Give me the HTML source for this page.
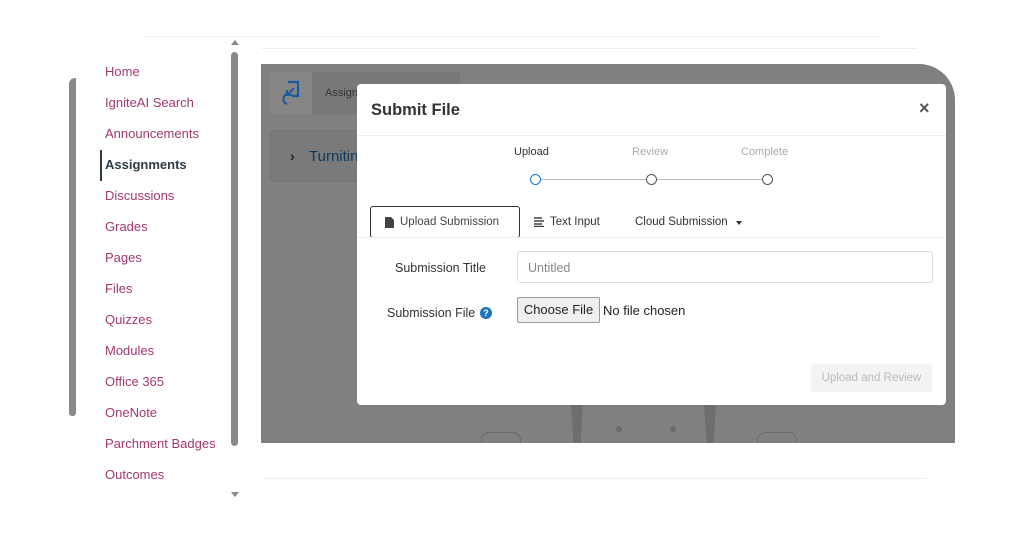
<!DOCTYPE html>
<html><head><meta charset="utf-8"><style>
*{box-sizing:border-box;margin:0;padding:0}
body{width:1024px;height:535px;background:#fff;position:relative;overflow:hidden;font-family:"Liberation Sans",sans-serif}
.abs{position:absolute}
.nav a{position:absolute;left:105px;color:#a3386f;font-size:13px;text-decoration:none;white-space:nowrap}
.nav a.act{color:#2d3b45;font-weight:bold}
</style></head><body>
<div class="abs" style="left:145px;top:36px;width:735px;height:1px;background:#eee"></div>
<div class="abs" style="left:262px;top:48px;width:655px;height:1px;background:#eee"></div>
<div class="abs" style="left:262px;top:478px;width:665px;height:1px;background:#eee"></div>
<div class="abs" style="left:69px;top:78px;width:7px;height:338px;background:#8a8a8a;border-radius:6px 0 3px 3px"></div>
<div class="abs" style="left:231px;top:52px;width:7px;height:394px;background:#8a8a8a;border-radius:4px"></div>
<div class="abs" style="left:231px;top:40px;width:0;height:0;border-left:4px solid transparent;border-right:4px solid transparent;border-bottom:5px solid #888"></div>
<div class="abs" style="left:231px;top:492px;width:0;height:0;border-left:4px solid transparent;border-right:4px solid transparent;border-top:5px solid #888"></div>
<div class="nav">
<a style="top:64px">Home</a>
<a style="top:95px">IgniteAI Search</a>
<a style="top:126px">Announcements</a>
<div class="abs" style="left:100px;top:150px;width:2px;height:31px;background:#2d3b45"></div>
<a class="act" style="top:157px">Assignments</a>
<a style="top:188px">Discussions</a>
<a style="top:219px">Grades</a>
<a style="top:250px">Pages</a>
<a style="top:281px">Files</a>
<a style="top:312px">Quizzes</a>
<a style="top:343px">Modules</a>
<a style="top:374px">Office 365</a>
<a style="top:405px">OneNote</a>
<a style="top:436px">Parchment Badges</a>
<a style="top:467px">Outcomes</a>
</div>
<div class="abs" style="left:261px;top:64px;width:694px;height:379px;background:#808080;border-radius:0 36px 0 0;overflow:hidden">
  <div class="abs" style="left:9px;top:8px;width:42px;height:42px;background:#868686"></div>
  <svg class="abs" style="left:19px;top:16px" width="22" height="26" viewBox="0 0 22 26"><path d="M8 2H18V16H12" fill="none" stroke="#1a5aa0" stroke-width="2.2"/><path d="M14 8L7 15M7 10V15H12" fill="none" stroke="#1a5aa0" stroke-width="2"/><path d="M6 14C2 18 3 23 7 24" fill="none" stroke="#1a5aa0" stroke-width="2"/></svg>
  <div class="abs" style="left:51px;top:8px;width:148px;height:42px;background:#787878"></div>
  <div class="abs" style="left:64px;top:23px;font-size:11px;color:#333">Assignments</div>
  <div class="abs" style="left:9px;top:66px;width:120px;height:52px;background:#7a7a7a;border:1px solid #757575;border-radius:3px"></div>
  <div class="abs" style="left:29px;top:84px;font-size:14px;color:#222;font-weight:bold">›</div>
  <div class="abs" style="left:48px;top:84px;font-size:15px;color:#0e3a5e">Turnitin</div>
  <div class="abs" style="left:310px;top:340px;width:12px;height:40px;background:#6e6e6e;clip-path:polygon(0 0,100% 0,80% 100%,20% 100%)"></div>
  <div class="abs" style="left:443px;top:340px;width:12px;height:40px;background:#6e6e6e;clip-path:polygon(0 0,100% 0,80% 100%,20% 100%)"></div>
  <div class="abs" style="left:355px;top:362px;width:6px;height:6px;border-radius:50%;background:#6a6a6a"></div>
  <div class="abs" style="left:409px;top:362px;width:6px;height:6px;border-radius:50%;background:#6a6a6a"></div>
  <div class="abs" style="left:220px;top:368px;width:40px;height:14px;border:1px solid #6a6a6a;border-bottom:none;border-radius:8px 8px 0 0"></div>
  <div class="abs" style="left:496px;top:368px;width:40px;height:14px;border:1px solid #6a6a6a;border-bottom:none;border-radius:8px 8px 0 0"></div>
</div>
<div class="abs" style="left:357px;top:84px;width:589px;height:321px;background:#fff;border-radius:4px">
  <div class="abs" style="left:14px;top:17px;font-size:16.5px;font-weight:bold;color:#333">Submit File</div>
  <div class="abs" style="left:562px;top:14px;font-size:18px;color:#555;font-weight:bold">×</div>
  <div class="abs" style="left:0;top:51px;width:589px;height:1px;background:#eee"></div>
  <div class="abs" style="left:157px;top:62px;font-size:11px;color:#333">Upload</div>
  <div class="abs" style="left:275px;top:62px;font-size:11px;color:#aaa">Review</div>
  <div class="abs" style="left:384px;top:62px;font-size:11px;color:#aaa">Complete</div>
  <div class="abs" style="left:183px;top:95px;width:228px;height:1px;background:#bbb"></div>
  <div class="abs" style="left:173px;top:90px;width:11px;height:11px;border:1.5px solid #1b75bb;border-radius:50%;background:#fff"></div>
  <div class="abs" style="left:289px;top:90px;width:11px;height:11px;border:1.5px solid #555;border-radius:50%;background:#fff"></div>
  <div class="abs" style="left:405px;top:90px;width:11px;height:11px;border:1.5px solid #555;border-radius:50%;background:#fff"></div>
  <div class="abs" style="left:13px;top:122px;width:150px;height:32px;border:1.5px solid #333;border-radius:3px"></div>
  <svg class="abs" style="left:28px;top:133px" width="9" height="11"><path d="M0 0H6L9 3V11H0Z" fill="#444"/></svg>
  <div class="abs" style="left:43px;top:132px;font-size:11.5px;color:#444">Upload Submission</div>
  <svg class="abs" style="left:177px;top:133px" width="10" height="10"><path d="M0 1H8M0 4H10M0 7H8M0 9.5H10" stroke="#444" stroke-width="1.5"/></svg>
  <div class="abs" style="left:193px;top:132px;font-size:11.5px;color:#333">Text Input</div>
  <div class="abs" style="left:278px;top:132px;font-size:11.5px;color:#333">Cloud Submission</div>
  <div class="abs" style="left:379px;top:137px;width:0;height:0;border-left:3px solid transparent;border-right:3px solid transparent;border-top:4px solid #333"></div>
  <div class="abs" style="left:0;top:153px;width:589px;height:1px;background:#eee"></div>
  <div class="abs" style="left:38px;top:177px;font-size:12.5px;color:#333">Submission Title</div>
  <div class="abs" style="left:160px;top:167px;width:416px;height:32px;border:1px solid #ddd;border-radius:3px"></div>
  <div class="abs" style="left:171px;top:177px;font-size:12.5px;color:#888">Untitled</div>
  <div class="abs" style="left:30px;top:222px;font-size:12.5px;color:#333">Submission File</div>
  <div class="abs" style="left:123px;top:223px;width:12px;height:12px;border-radius:50%;background:#1b75bb;color:#fff;font-size:9px;font-weight:bold;text-align:center;line-height:12px">?</div>
  <div class="abs" style="left:160px;top:213px;width:83px;height:26px;border:1px solid #999;border-radius:2px;background:#efefef;font-size:13px;color:#222;text-align:center;line-height:24px">Choose File</div>
  <div class="abs" style="left:246px;top:219px;font-size:13px;color:#222">No file chosen</div>
  <div class="abs" style="left:454px;top:280px;width:121px;height:28px;background:#f2f3f4;border-radius:3px;font-size:11.5px;color:#bbb;text-align:center;line-height:28px">Upload and Review</div>
</div>
</body></html>
